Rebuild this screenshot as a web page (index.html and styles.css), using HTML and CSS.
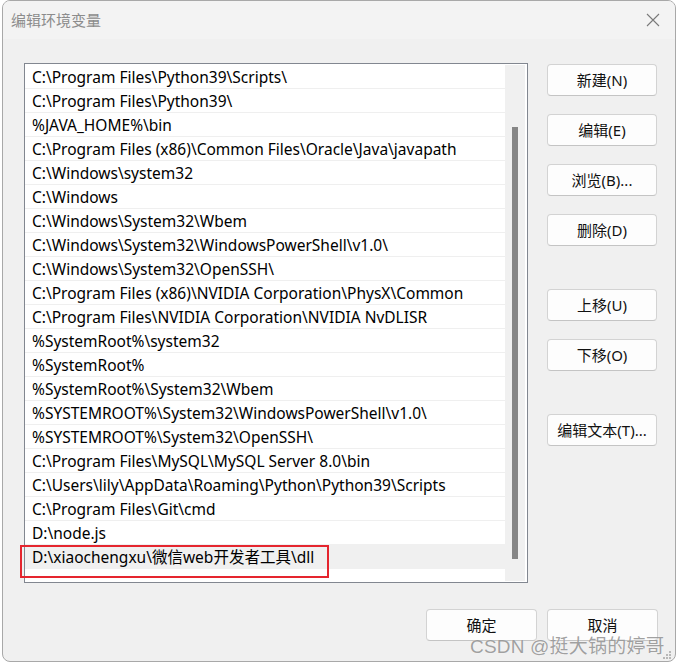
FILE: index.html
```html
<!DOCTYPE html>
<html lang="zh-CN">
<head>
<meta charset="utf-8">
<title>编辑环境变量</title>
<link rel="stylesheet" href="styles.css">
</head>
<body>
<div class="window">
  <div class="titlebar">
    <span class="title">编辑环境变量</span>
    <svg class="close" width="14" height="14" viewBox="0 0 14 14"><path d="M1 1 L13 13 M13 1 L1 13" stroke="#7a7a7a" stroke-width="1.1" fill="none"/></svg>
  </div>
  <div class="content">
    <div class="main">
      <div class="listbox">
        <div class="rows">
          <div class="row">C:\Program Files\Python39\Scripts\</div>
          <div class="row">C:\Program Files\Python39\</div>
          <div class="row">%JAVA_HOME%\bin</div>
          <div class="row">C:\Program Files (x86)\Common Files\Oracle\Java\javapath</div>
          <div class="row">C:\Windows\system32</div>
          <div class="row">C:\Windows</div>
          <div class="row">C:\Windows\System32\Wbem</div>
          <div class="row">C:\Windows\System32\WindowsPowerShell\v1.0\</div>
          <div class="row">C:\Windows\System32\OpenSSH\</div>
          <div class="row">C:\Program Files (x86)\NVIDIA Corporation\PhysX\Common</div>
          <div class="row">C:\Program Files\NVIDIA Corporation\NVIDIA NvDLISR</div>
          <div class="row">%SystemRoot%\system32</div>
          <div class="row">%SystemRoot%</div>
          <div class="row">%SystemRoot%\System32\Wbem</div>
          <div class="row">%SYSTEMROOT%\System32\WindowsPowerShell\v1.0\</div>
          <div class="row">%SYSTEMROOT%\System32\OpenSSH\</div>
          <div class="row">C:\Program Files\MySQL\MySQL Server 8.0\bin</div>
          <div class="row">C:\Users\lily\AppData\Roaming\Python\Python39\Scripts</div>
          <div class="row">C:\Program Files\Git\cmd</div>
          <div class="row">D:\node.js</div>
          <div class="row selected">D:\xiaochengxu\微信web开发者工具\dll</div>
        </div>
        <div class="scrollbar"><div class="thumb"></div></div>
      </div>
      <div class="side">
        <div class="group">
          <button class="btn">新建(N)</button>
          <button class="btn">编辑(E)</button>
          <button class="btn">浏览(B)...</button>
          <button class="btn">删除(D)</button>
        </div>
        <div class="group">
          <button class="btn">上移(U)</button>
          <button class="btn">下移(O)</button>
        </div>
        <div class="group">
          <button class="btn">编辑文本(T)...</button>
        </div>
      </div>
    </div>
    <div class="footer">
      <button class="btn wide">确定</button>
      <button class="btn wide">取消</button>
    </div>
  </div>
  <div class="highlight-box"></div>
  <div class="watermark">CSDN @挺大锅的婷哥</div>
  <svg class="grip" width="12" height="8" viewBox="0 0 12 8">
    <rect x="8" y="0" width="2" height="2" fill="#b8b8b8"/>
    <rect x="5" y="3" width="2" height="2" fill="#b8b8b8"/>
    <rect x="8" y="3" width="2" height="2" fill="#b8b8b8"/>
    <rect x="2" y="6" width="2" height="2" fill="#b8b8b8"/>
    <rect x="5" y="6" width="2" height="2" fill="#b8b8b8"/>
    <rect x="8" y="6" width="2" height="2" fill="#b8b8b8"/>
  </svg>
</div>
</body>
</html>
```
FILE: styles.css
```css
* { box-sizing: border-box; }
html, body { margin: 0; padding: 0; background: #ffffff; }
body {
  font-family: "Noto Sans", "Noto Sans CJK SC", sans-serif;
  width: 677px;
  height: 664px;
  overflow: hidden;
}
.window {
  position: relative;
  margin-left: 2px;
  width: 674px;
  height: 662px;
  border: 1px solid #a8a8a8;
  border-radius: 8px;
  background: #f0f0f0;
  overflow: hidden;
}
.titlebar {
  height: 38px;
  background: #f3f3f3;
  display: flex;
  align-items: center;
  justify-content: space-between;
  padding: 0 15px 0 8px;
}
.title {
  font-family: "Noto Sans CJK SC", sans-serif;
  font-size: 15px;
  color: #8c8c8c;
  line-height: 20px;
  margin-top: -1px;
}
.close { display: block; }
.content {
  padding: 24px 0 0 21px;
}
.main {
  display: flex;
  align-items: flex-start;
}
.listbox {
  width: 504px;
  height: 520px;
  border: 1px solid #828790;
  background: #ffffff;
  display: flex;
}
.rows {
  width: 480px;
  padding-top: 1px;
}
.row {
  height: 24px;
  border-bottom: 1px solid #efefef;
  padding: 1px 0 0 7px;
  font-size: 15.5px;
  line-height: 23px;
  color: #000;
  white-space: nowrap;
  overflow: hidden;
}
.row.selected {
  background: #f0f0f0;
  border-bottom-color: #f0f0f0;
  margin-top: -1px;
  height: 25px;
  padding-top: 1px;
  line-height: 24px;
}
.scrollbar {
  width: 20px;
  margin: 1px 0 1px 0;
  background: #f0f0f0;
  padding-top: 62px;
  padding-left: 7px;
}
.thumb {
  width: 6px;
  height: 432px;
  background: #868686;
}
.side {
  margin-left: 19px;
  margin-top: 1px;
  display: flex;
  flex-direction: column;
  gap: 43px;
}
.group {
  display: flex;
  flex-direction: column;
  gap: 18px;
}
.btn {
  width: 110px;
  height: 32px;
  border: 1px solid #d3d3d3;
  border-bottom-color: #c4c4c4;
  border-radius: 4px;
  background: #fdfdfd;
  font-family: "Noto Sans", "Noto Sans CJK SC", sans-serif;
  font-size: 15px;
  color: #111111;
  padding: 0;
  margin: 0;
  line-height: 30px;
}
.btn.wide { width: 111px; }
.footer {
  display: flex;
  justify-content: flex-end;
  gap: 10px;
  margin-top: 26px;
  padding-right: 17px;
}
.highlight-box {
  position: absolute;
  left: 17px;
  top: 544px;
  width: 309px;
  height: 33px;
  border: 2px solid #e5252e;
}
.watermark {
  position: absolute;
  left: 467px;
  top: 634px;
  font-family: "Liberation Sans", "Noto Sans CJK SC", sans-serif;
  font-size: 19px;
  line-height: 24px;
  color: rgba(130, 130, 130, 0.75);
  text-shadow: 0 0 1px rgba(255,255,255,0.8);
  white-space: nowrap;
  letter-spacing: 0.2px;
}
.grip {
  position: absolute;
  right: 2px;
  bottom: 2px;
}
```
